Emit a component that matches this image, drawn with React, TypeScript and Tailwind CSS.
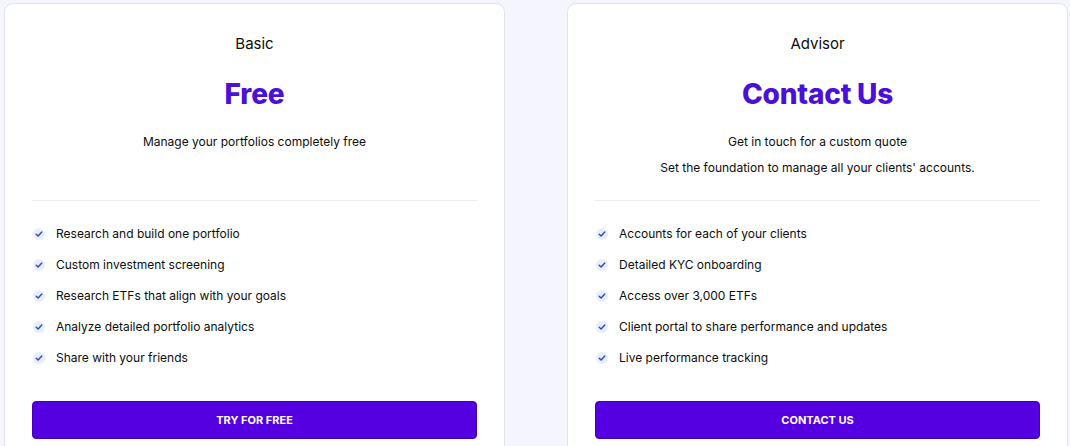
import React from "react";

const Check = () => (
  <span className="flex h-[12px] w-[12px] shrink-0 items-center justify-center rounded-full bg-[#e8eefc]">
    <svg width="8" height="8" viewBox="0 0 8 8" fill="none">
      <path d="M1.2 4.2 L3.1 6 L6.8 2" stroke="#2a47c9" strokeWidth="1.4" strokeLinecap="round" strokeLinejoin="round" />
    </svg>
  </span>
);

type Plan = {
  name: string;
  price: string;
  desc: string[];
  features: string[];
  cta: string;
};

const plans: Plan[] = [
  {
    name: "Basic",
    price: "Free",
    desc: ["Manage your portfolios completely free"],
    features: [
      "Research and build one portfolio",
      "Custom investment screening",
      "Research ETFs that align with your goals",
      "Analyze detailed portfolio analytics",
      "Share with your friends",
    ],
    cta: "TRY FOR FREE",
  },
  {
    name: "Advisor",
    price: "Contact Us",
    desc: ["Get in touch for a custom quote", "Set the foundation to manage all your clients' accounts."],
    features: [
      "Accounts for each of your clients",
      "Detailed KYC onboarding",
      "Access over 3,000 ETFs",
      "Client portal to share performance and updates",
      "Live performance tracking",
    ],
    cta: "CONTACT US",
  },
];

const Card = ({ plan }: { plan: Plan }) => (
  <div className="w-[501px] h-[460px] shrink-0 rounded-[9px] border border-[#e1e1f1] bg-white px-[27px] text-[#0d0d0d]">
    <div className="flex h-[196px] flex-col items-center pt-[30px]">
      <div className="text-[15px] leading-[20px]">{plan.name}</div>
      <div className="mt-[22px] text-[28px] font-extrabold leading-[36px] tracking-[-0.2px] text-[#4a10d9]">{plan.price}</div>
      <div className="mt-[20px] flex flex-col items-center gap-[6px]">
        {plan.desc.map((d) => (
          <div key={d} className="text-[12px] leading-[20px]">{d}</div>
        ))}
      </div>
    </div>
    <div className="border-t border-[#ececf0]" />
    <ul className="flex flex-col gap-[11px] pt-[23px]">
      {plan.features.map((f) => (
        <li key={f} className="flex items-center gap-[11px] pl-[1px] text-[12px] leading-[20px]">
          <Check />
          <span>{f}</span>
        </li>
      ))}
    </ul>
    <button className="mt-[33px] flex h-[38px] w-full items-center justify-center rounded-[4px] border border-[#3e00b8] bg-[#5500e0] text-[11px] font-bold text-white">
      {plan.cta}
    </button>
  </div>
);

export default function App() {
  return (
    <div className="h-[446px] w-[1070px] overflow-hidden bg-[#f5f5fd] font-['Inter','Noto_Sans',sans-serif]">
      <div className="flex gap-[62px] pl-[4px] pt-[3px]">
        {plans.map((p) => (
          <Card key={p.name} plan={p} />
        ))}
      </div>
    </div>
  );
}
